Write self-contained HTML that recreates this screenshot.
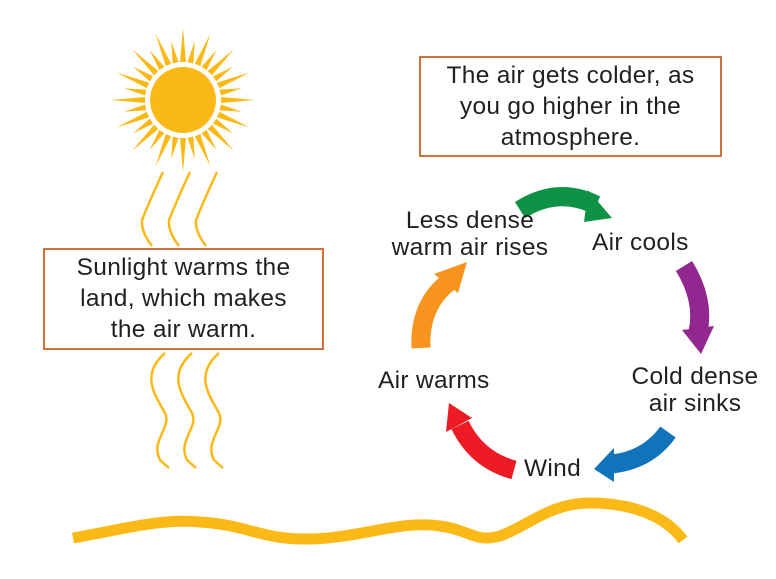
<!DOCTYPE html>
<html><head><meta charset="utf-8"><style>
html,body{margin:0;padding:0;background:#fff;}
body{width:776px;height:579px;position:relative;overflow:hidden;font-family:"Liberation Sans",sans-serif;color:#231f20;}
.box{position:absolute;border:2px solid #d2703a;box-sizing:border-box;text-align:center;font-size:24.5px;line-height:31px;letter-spacing:0.3px;}
.t{position:absolute;font-size:24.5px;line-height:27px;white-space:nowrap;text-align:center;letter-spacing:0.3px;}
svg{position:absolute;left:0;top:0;}
</style></head><body>
<svg width="776" height="579" viewBox="0 0 776 579">
<g id="sun" fill="#fbb917"><circle cx="183" cy="100" r="33"/></g>
<g fill="none" stroke="#fbb917" stroke-width="2.5">
<path d="M163 172 Q150 200 142 220 Q141 232 152 246"/>
<path d="M190 172 Q177 200 169 220 Q168 232 179 246"/>
<path d="M217 172 Q204 200 196 220 Q195 232 206 246"/>
<path d="M165 353 C140 375 155 395 165 413 C172 428 150 440 160 460 L169 468"/>
<path d="M192 353 C167 375 182 395 192 413 C199 428 177 440 187 460 L196 468"/>
<path d="M219 353 C194 375 209 395 219 413 C226 428 204 440 214 460 L223 468"/>
</g>
<path d="M73 538 C120 530 160 518 200 522 C250 525 260 540 310 539 C360 538 400 520 440 526 C470 530 475 543 500 536 C530 525 550 503 590 503 C630 503 665 515 683 540" fill="none" stroke="#fbb917" stroke-width="11"/>
<g stroke-width="19" fill="none" stroke-linecap="butt">
<path d="M520 210 Q558 186 596 205" stroke="#0f9146"/>
<path d="M684 266 Q705 300 698 332" stroke="#92278f"/>
<path d="M668 432 Q648 460 612 464" stroke="#1174bb"/>
<path d="M514 470 Q477 460 460 425" stroke="#ed1c24"/>
<path d="M421 348 Q419 305 449 282" stroke="#f7941d"/>
</g>
<polygon points="588,190 612,218 584,222" fill="#0f9146"/>
<polygon points="682,330 714,326 701,354" fill="#92278f"/>
<polygon points="614,448 614,482 594,469" fill="#1174bb"/>
<polygon points="446,432 472,418 449,403" fill="#ed1c24"/>
<polygon points="434,274 458,293 467,262" fill="#f7941d"/>
</svg>
<script>
var g=document.getElementById('sun'),s='';
for(var i=0;i<32;i++){var a=i*Math.PI*2/32,L=(i%2?60:72),r=38,w=3;
var c=Math.cos(a),sn=Math.sin(a),px=-sn,py=c;
var x1=183+c*r,y1=100+sn*r,x2=183+c*L,y2=100+sn*L;
s+='<polygon points="'+(x1+px*w)+','+(y1+py*w)+' '+(x1-px*w)+','+(y1-py*w)+' '+x2+','+y2+'"/>';}
g.innerHTML+=s;
</script>
<div class="box" style="left:419px;top:56px;width:303px;height:101px;padding-top:2px;">The air gets colder, as<br>you go higher in the<br>atmosphere.</div>
<div class="box" style="left:43px;top:248px;width:281px;height:102px;padding-top:2px;">Sunlight warms the<br>land, which makes<br>the air warm.</div>
<div class="t" style="left:380px;top:207px;width:180px;">Less dense<br>warm air rises</div>
<div class="t" style="left:592px;top:229px;">Air cools</div>
<div class="t" style="left:620px;top:363px;width:150px;">Cold dense<br>air sinks</div>
<div class="t" style="left:378px;top:367px;">Air warms</div>
<div class="t" style="left:524px;top:455px;">Wind</div>
</body></html>
